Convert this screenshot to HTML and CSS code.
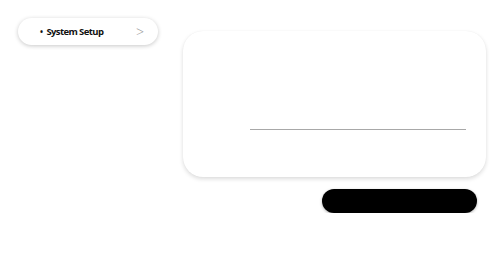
FILE: index.html
```html
<!DOCTYPE html>
<html>
<head>
    <meta charset="UTF-8">
    <title>System Setup</title>
    <link rel="stylesheet" href="styles.css">
</head>
<body>
    <div class="page">
        <!-- Menu pill -->
        <div class="menu-pill">
            <span class="menu-label"><span class="bullet">&bull;</span>System Setup</span>
            <span class="menu-arrow">&gt;</span>
        </div>

        <!-- Main panel -->
        <div class="panel">
            <div class="panel-line"></div>
        </div>

        <!-- Action button -->
        <div class="actions">
            <button class="btn-dark"></button>
        </div>
    </div>
</body>
</html>
```

FILE: styles.css
```css
body { margin: 0; background: #fff; font-family: "Open Sans", "Noto Sans", sans-serif; }
.page { padding: 18px 14px 0 18px; width: 500px; box-sizing: border-box; }
.menu-pill { width: 140px; height: 27px; box-sizing: border-box; border-radius: 14px; background: #fff; box-shadow: 0 1px 4px rgba(0,0,0,0.22); display: flex; align-items: center; justify-content: space-between; padding: 0 14px 0 22px; position: relative; z-index: 1; }
.menu-label { font-size: 9.5px; font-weight: 700; color: #111; letter-spacing: -0.6px; }
.bullet { font-size: 8px; margin-right: 4px; }
.menu-arrow { font-size: 14px; color: #999; font-weight: 300; }
.panel { margin: -14px 0 0 165px; width: 303px; height: 146px; box-sizing: border-box; border-radius: 20px; background: #fff; box-shadow: 0 2px 4px rgba(0,0,0,0.14), 0 0 1px rgba(0,0,0,0.06); padding: 98px 20px 0 67px; }
.panel-line { height: 1px; background: #a8a8a8; }
.actions { margin: 12px 0 0 304px; }
.btn-dark { display: block; width: 155px; height: 24px; border: 0; border-radius: 12px; background: #000; box-shadow: 0 1px 3px rgba(0,0,0,0.3); padding: 0; }
```
